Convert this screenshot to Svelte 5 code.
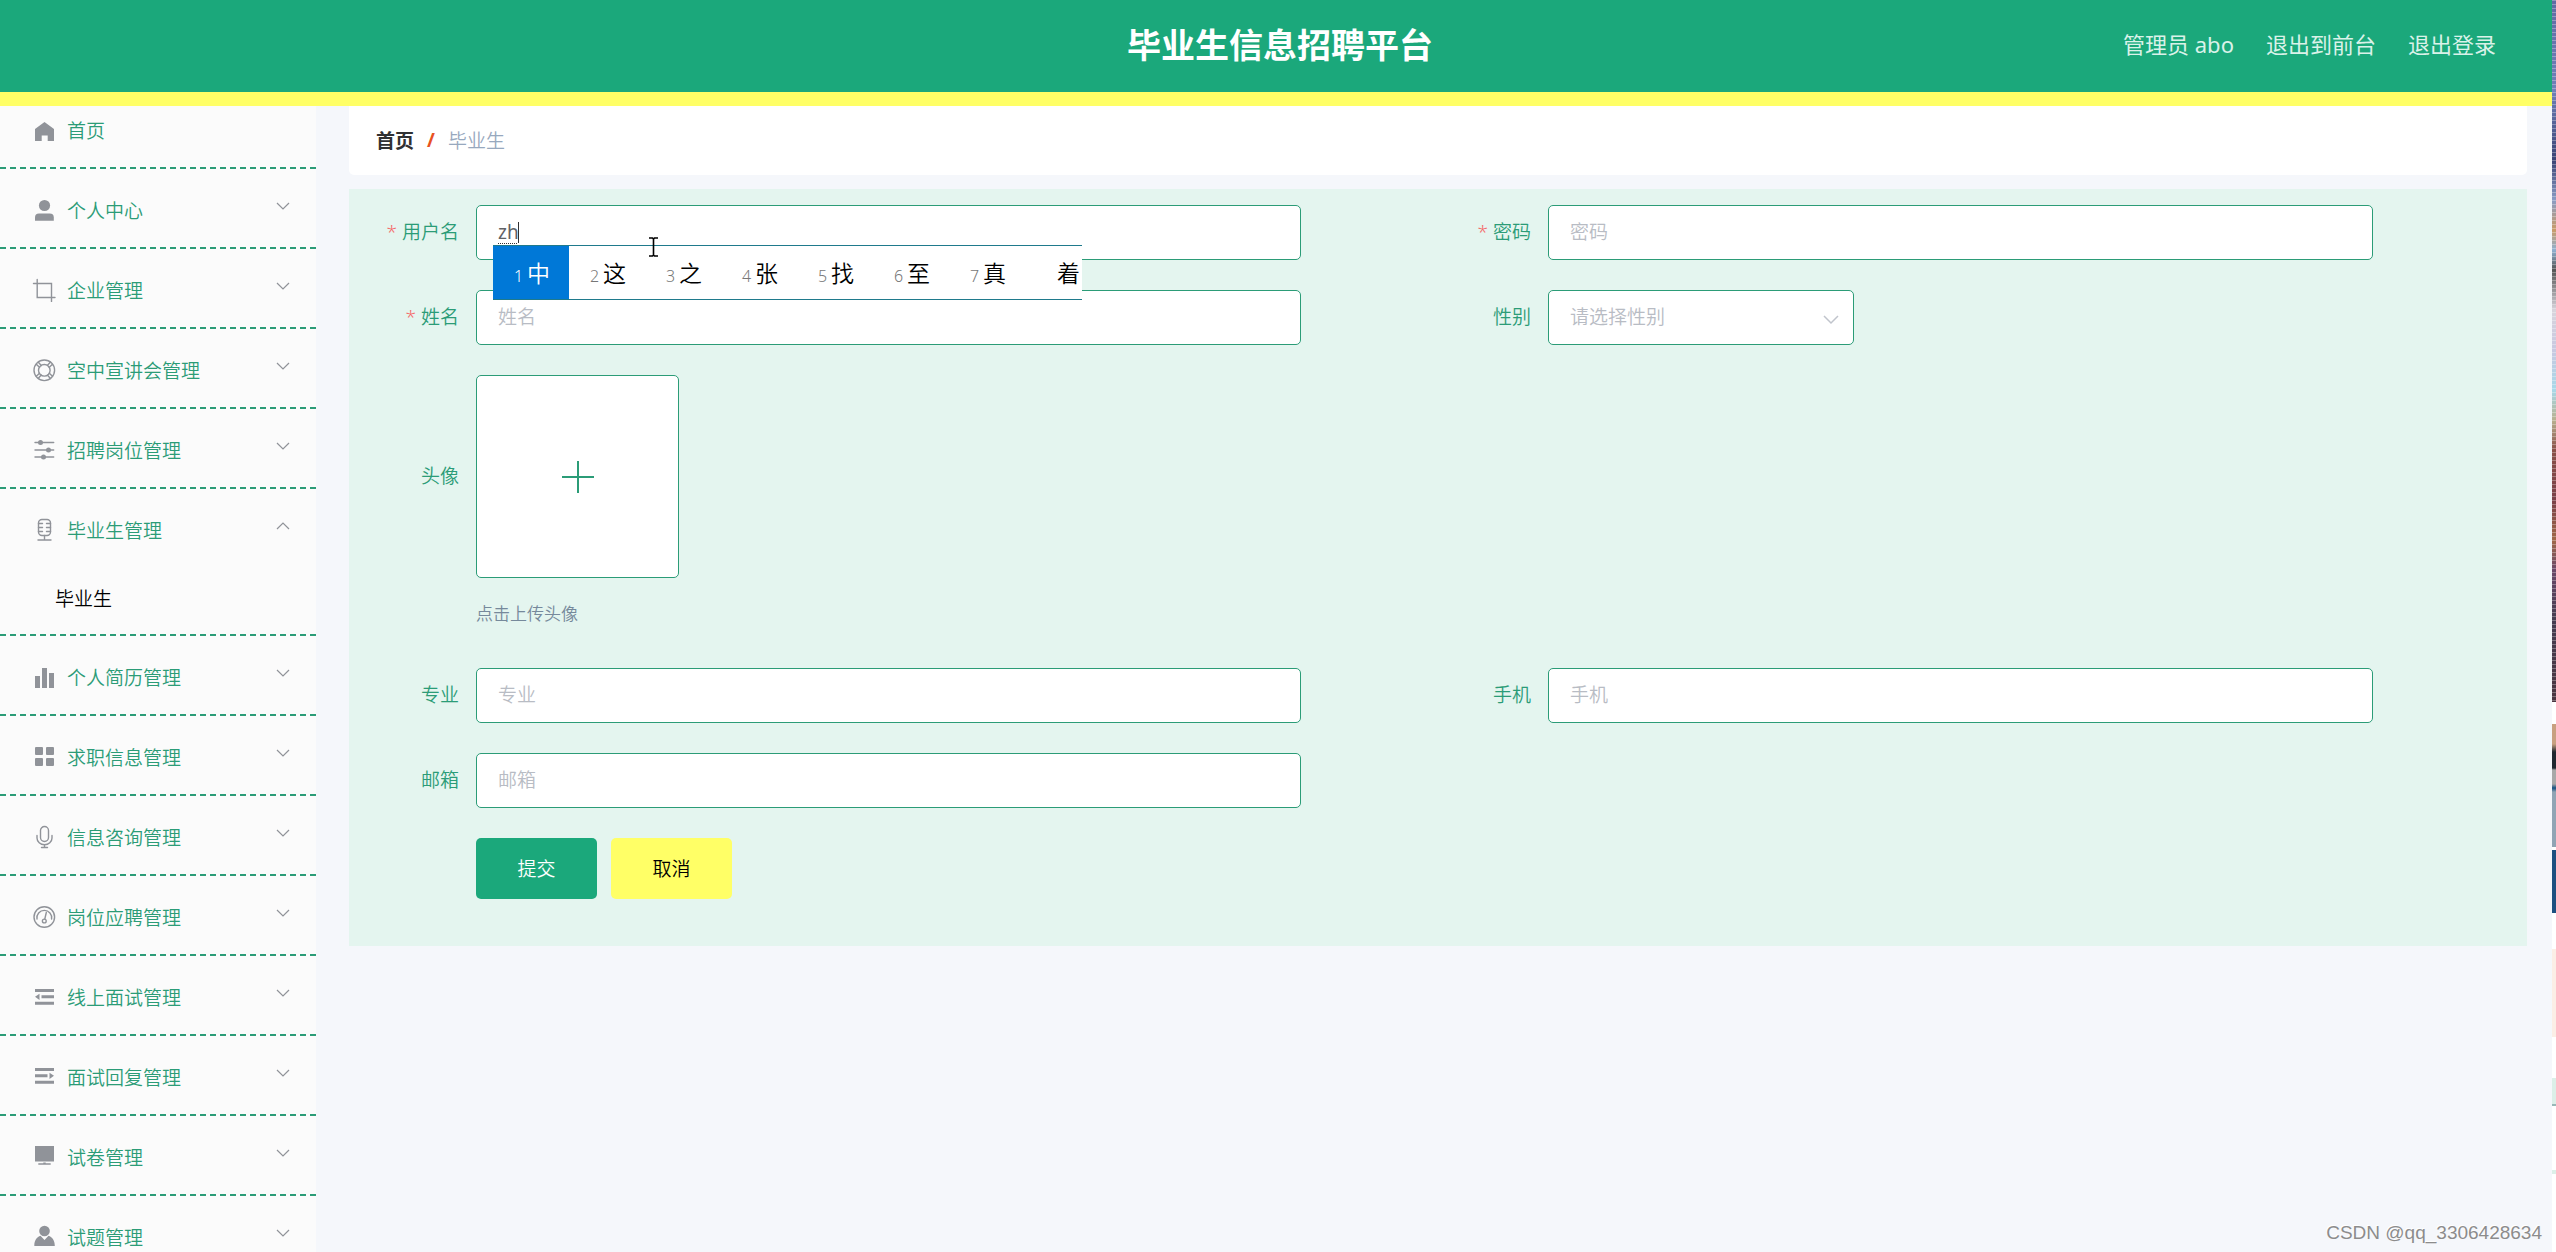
<script lang="ts">
  interface MenuItem {
    icon: string;
    label: string;
    open?: boolean;
    children?: string[];
  }

  let form = $state({
    username: 'zh',
    password: '',
    name: '',
    gender: '',
    major: '',
    phone: '',
    email: ''
  });

  let menu = $state<MenuItem[]>([
    { icon: 'user', label: '个人中心' },
    { icon: 'crop', label: '企业管理' },
    { icon: 'help', label: '空中宣讲会管理' },
    { icon: 'operation', label: '招聘岗位管理' },
    { icon: 'mic', label: '毕业生管理', open: true, children: ['毕业生'] },
    { icon: 'histogram', label: '个人简历管理' },
    { icon: 'grid', label: '求职信息管理' },
    { icon: 'microphone', label: '信息咨询管理' },
    { icon: 'odometer', label: '岗位应聘管理' },
    { icon: 'fold', label: '线上面试管理' },
    { icon: 'unfold', label: '面试回复管理' },
    { icon: 'platform', label: '试卷管理' },
    { icon: 'custom', label: '试题管理' }
  ]);

  const candidates = ['中', '这', '之', '张', '找', '至', '真', '着'];

  function toggle(item: MenuItem) {
    item.open = !item.open;
  }
</script>

{#snippet icon(name: string)}
  <svg class="icon" viewBox="0 0 24 24" aria-hidden="true">
    {#if name === 'home'}
      <path class="fill" d="M12.500 4 22 11v12h-6.300v-5.500h-6V23H3V11z" />
    {:else if name === 'user'}
      <circle class="fill" cx="12.500" cy="7.500" r="5.600" />
      <path class="fill" d="M3 22.800v-3.300q0-4 4-4h10.800q4 0 4 4v3.300z" />
    {:else if name === 'crop'}
      <path class="line" d="M1.500 5.500H19.500V23.500M5.200 1.500V19.500H23" />
    {:else if name === 'help'}
      <g class="line">
        <circle cx="12.300" cy="12.300" r="10.300" />
        <circle cx="12.300" cy="12.300" r="5.800" />
        <path d="m4.300 6.300 3.200 3M6.300 4.300l3 3.200M15.500 7.300l3-3.200M17.300 9.300l3.200-3M4.300 18.300l3.200-3M6.300 20.300l3-3.200M15.500 17.300l3 3.200M17.300 15.300l3.200 3" />
      </g>
    {:else if name === 'operation'}
      <path class="line" d="M3 4.500h18.700M3 12h18.700M3 19h18.700" />
      <g class="fill">
        <circle cx="8.500" cy="4.500" r="2.500" />
        <circle cx="16.500" cy="12" r="2.500" />
        <circle cx="11.500" cy="19" r="2.500" />
      </g>
    {:else if name === 'mic'}
      <g class="line">
        <rect x="6.500" y="1.500" width="12" height="16" rx="3.500" />
        <path d="M6.500 5.500h4M6.500 9.500h4M6.500 13.500h4M18.500 5.500h-4M18.500 9.500h-4M18.500 13.500h-4M12.500 17.500V22M6 22h13" />
      </g>
    {:else if name === 'histogram'}
      <path class="fill" d="M3 11h5v12H3zM10 3h5v20h-5zM17 8h5v15h-5z" />
    {:else if name === 'grid'}
      <g class="fill">
        <rect x="3" y="2" width="8" height="8" rx="1" />
        <rect x="14" y="2" width="8" height="8" rx="1" />
        <rect x="3" y="13" width="8" height="8" rx="1" />
        <rect x="14" y="13" width="8" height="8" rx="1" />
      </g>
    {:else if name === 'microphone'}
      <g class="line">
        <rect x="8.500" y="1.500" width="8" height="15" rx="4" />
        <path d="M5 10.500v2.500a7.500 6.800 0 0 0 15 0v-2.500M12.500 20v2.500M9.500 22.500h6" />
      </g>
    {:else if name === 'odometer'}
      <g class="line">
        <circle cx="12.300" cy="12" r="10.300" />
        <path d="M5 14a7.400 7.400 0 1 1 14.600 0M14.300 7.500l-1.500 6.500" />
        <circle cx="12.300" cy="16" r="1.900" />
      </g>
    {:else if name === 'fold'}
      <path class="fill" d="M3 4h19v3H3zM9.500 10.300H22v3H9.500zM3 16.700h19v3H3zM3 11.800l4.500-3.100v6.200z" />
    {:else if name === 'unfold'}
      <path class="fill" d="M3 3h19v3H3zM3 9.300h12.500v3H3zM3 15.700h19v3H3zM22 10.800l-4.500-3.100v6.200z" />
    {:else if name === 'platform'}
      <path class="fill" d="M3 1h19v15.500H3zM11.300 17.500h2.400v.8h5v1.500H6.300v-1.500h5z" />
    {:else if name === 'custom'}
      <circle class="fill" cx="12.500" cy="6" r="5.300" />
      <path class="fill" d="M2.300 21c0-6 2.700-9 6.200-10.200l4 4.200 4-4.200C20 12 22.800 15 22.800 21z" />
    {/if}
  </svg>
{/snippet}

<div class="screen">
  <div class="app">
    <header class="header">
      <h1>毕业生信息招聘平台</h1>
      <nav class="header-links">
        <span>管理员 abo</span>
        <a href="#front">退出到前台</a>
        <a href="#logout">退出登录</a>
      </nav>
    </header>

    <div class="body">
      <nav class="sidebar">
        <ul class="menu">
          <li>
            <a class="menu-row" href="#home">
              {@render icon('home')}
              <span>首页</span>
            </a>
          </li>
          {#each menu as item}
            <li>
              <button class="menu-row" type="button" aria-expanded={!!item.open} onclick={() => toggle(item)}>
                {@render icon(item.icon)}
                <span>{item.label}</span>
                <svg class="arrow" class:up={item.open} viewBox="0 0 14 8" aria-hidden="true">
                  <path d="M1 1l6 6 6-6" />
                </svg>
              </button>
              {#if item.open && item.children}
                {#each item.children as child}
                  <a class="sub-row" href="#graduate">{child}</a>
                {/each}
              {/if}
            </li>
          {/each}
        </ul>
      </nav>

      <main class="main">
        <nav class="breadcrumb">
          <a href="#home">首页</a>
          <span class="slash">/</span>
          <span class="current">毕业生</span>
        </nav>

        <form class="form" onsubmit={(e) => e.preventDefault()}>
          <div class="field">
            <label for="username"><i>*</i>用户名</label>
            <div class="control">
              <input id="username" class="composing" type="text" autocomplete="off" bind:value={form.username} />
              <span class="caret"></span>
              <div class="ime">
                {#each candidates as word, i}
                  <div class="candidate" class:selected={i === 0}>
                    <small>{i < 7 ? i + 1 : ''}</small>
                    <span>{word}</span>
                  </div>
                {/each}
              </div>
              <svg class="ibeam" viewBox="0 0 9 20" aria-hidden="true">
                <path d="M0 1h3.500l1 1 1-1H9M4.500 2v16M0 19h3.500l1-1 1 1H9" />
              </svg>
            </div>
          </div>
          <div class="field">
            <label for="password"><i>*</i>密码</label>
            <div class="control">
              <input id="password" type="text" placeholder="密码" bind:value={form.password} />
            </div>
          </div>
          <div class="field">
            <label for="name"><i>*</i>姓名</label>
            <div class="control">
              <input id="name" type="text" placeholder="姓名" bind:value={form.name} />
            </div>
          </div>
          <div class="field">
            <label for="gender">性别</label>
            <div class="control select">
              <select id="gender" bind:value={form.gender}>
                <option value="">请选择性别</option>
                <option value="男">男</option>
                <option value="女">女</option>
              </select>
              <svg class="select-arrow" viewBox="0 0 16 10" aria-hidden="true">
                <path d="M1 1l7 7 7-7" />
              </svg>
            </div>
          </div>
          <div class="field full avatar">
            <label for="avatar">头像</label>
            <div class="control">
              <label class="upload" for="avatar">
                <svg viewBox="0 0 32 32" aria-hidden="true"><path d="M16 0v32M0 16h32" /></svg>
                <input id="avatar" type="file" accept="image/*" aria-label="头像" />
              </label>
              <p class="tip">点击上传头像</p>
            </div>
          </div>
          <div class="field">
            <label for="major">专业</label>
            <div class="control">
              <input id="major" type="text" placeholder="专业" bind:value={form.major} />
            </div>
          </div>
          <div class="field">
            <label for="phone">手机</label>
            <div class="control">
              <input id="phone" type="text" placeholder="手机" bind:value={form.phone} />
            </div>
          </div>
          <div class="field">
            <label for="email">邮箱</label>
            <div class="control">
              <input id="email" type="text" placeholder="邮箱" bind:value={form.email} />
            </div>
          </div>
          <div class="actions full">
            <button class="btn submit" type="submit">提交</button>
            <button class="btn cancel" type="button">取消</button>
          </div>
        </form>
      </main>
    </div>
  </div>
  <div class="edge"></div>
  <div class="watermark">CSDN @qq_3306428634</div>
</div>

<style>
  :global(body) {
    font-family: 'Noto Sans', 'Noto Sans CJK SC', sans-serif;
    font-size: 19px;
    background: #f5f7fb;
  }
  .screen {
    --green: #1ba87b;
    --line: #2b9c77;
    position: relative;
    display: flex;
    height: 100vh;
    overflow: hidden;
    font-weight: 350;
  }
  .app { flex: 1; display: flex; flex-direction: column; min-width: 0; }
  a { color: inherit; text-decoration: none; }
  button, input, select { font: inherit; box-sizing: border-box; }

  .header {
    position: relative;
    z-index: 2;
    display: grid;
    grid-template-columns: 1fr auto 1fr;
    align-items: center;
    height: 86px;
    flex-shrink: 0;
    padding: 0 56px 6px 64px;
    background: var(--green);
    border-bottom: 14px solid #ffff66;
  }
  .header h1 { grid-column: 2; margin: 0; font-size: 34px; font-weight: 700; color: #fff; }
  .header-links {
    display: flex;
    justify-content: flex-end;
    gap: 32px;
    font-size: 22px;
    font-weight: 400;
    color: #daf2e9;
  }

  .body { flex: 1; display: flex; min-height: 0; }
  .sidebar { width: 316px; flex-shrink: 0; background: #fbfbfb; }
  /* the list is scrolled a little under the header */
  .menu { list-style: none; margin: -17px 0 0; padding: 0; }
  .menu li { border-bottom: 2px dashed var(--line); }
  .menu-row {
    display: flex;
    align-items: center;
    gap: 11px;
    width: 100%;
    height: 78px;
    box-sizing: border-box;
    padding: 4px 26px 0 32px;
    border: none;
    background: none;
    color: var(--line);
    text-align: left;
    cursor: pointer;
  }
  .icon { width: 24px; height: 24px; flex-shrink: 0; }
  .fill { fill: #909399; }
  .line { fill: none; stroke: #909399; stroke-width: 1.4; stroke-linecap: round; }
  .arrow {
    width: 14px;
    height: 8px;
    margin: 0 0 8px auto;
    fill: none;
    stroke: #909399;
    stroke-width: 1.2;
  }
  .arrow.up { transform: rotate(180deg); }
  .sub-row { display: block; padding: 0 0 2px 55px; line-height: 65px; color: #000; }

  .main { flex: 1; min-width: 0; padding: 0 25px 0 33px; }
  .breadcrumb {
    display: flex;
    align-items: center;
    gap: 13px;
    height: 67px;
    padding: 0 0 2px 27px;
    margin-bottom: 14px;
    background: #fff;
    border-radius: 0 0 5px 5px;
  }
  .breadcrumb a { font-weight: 700; color: #303133; }
  .slash { font-weight: 700; color: #e8521f; }
  .current { color: #97a8be; }

  .form {
    display: grid;
    grid-template-columns: 1fr 1fr;
    row-gap: 30px;
    padding: 16px 17px 47px;
    background: #e4f5ef;
  }
  .full { grid-column: 1 / -1; }
  .field { display: grid; grid-template-columns: 110px 1fr; padding-right: 137px; }
  .field > label {
    padding-right: 17px;
    line-height: 55px;
    text-align: right;
    color: var(--line);
  }
  .field i { margin-right: 5px; font-style: normal; color: #f56c6c; }
  .control { position: relative; height: 55px; }
  .control > input, select {
    display: block;
    width: 100%;
    height: 55px;
    padding: 0 21px 2px;
    border: 1px solid var(--line);
    border-radius: 5px;
    background: #fff;
    color: #606266;
    outline: none;
  }
  input::placeholder { color: #b8bcc4; opacity: 1; }
  .control > .composing {
    font-weight: 400;
    text-decoration: underline dotted 1px #333;
    text-underline-offset: 4px;
  }
  .caret { position: absolute; left: 42px; top: 17px; width: 1px; height: 21px; background: #303133; }
  .select { width: 306px; }
  .select > select { appearance: none; color: #b8bcc4; }
  .select-arrow {
    position: absolute;
    right: 15px;
    top: 25px;
    width: 16px;
    height: 10px;
    fill: none;
    stroke: #c0c4cc;
    stroke-width: 1.5;
    pointer-events: none;
  }

  .ime {
    position: absolute;
    z-index: 1;
    left: 17px;
    top: 40px;
    display: flex;
    width: 589px;
    height: 55px;
    box-sizing: border-box;
    overflow: hidden;
    border: 1px solid #1f7a8c;
    border-width: 1px 0;
    background: #fff;
  }
  .candidate {
    display: flex;
    align-items: baseline;
    gap: 3px;
    flex: 0 0 76px;
    box-sizing: border-box;
    padding-left: 21px;
    line-height: 55px;
    font-size: 23px;
    color: #000;
  }
  .candidate small { width: 10px; font-size: 16px; color: #777; }
  .candidate small:empty { width: 8px; }
  .candidate.selected, .candidate.selected small { background: #0078d7; color: #fff; }
  .ibeam {
    position: absolute;
    z-index: 2;
    left: 173px;
    top: 32px;
    width: 9px;
    height: 20px;
    fill: none;
    stroke: #000;
    stroke-width: 1.6;
  }

  .avatar > label { line-height: 203px; }
  .avatar .control { height: auto; padding-bottom: 12px; }
  .upload {
    display: flex;
    align-items: center;
    justify-content: center;
    width: 203px;
    height: 203px;
    box-sizing: border-box;
    border: 1px solid var(--line);
    border-radius: 5px;
    background: #fff;
    cursor: pointer;
  }
  .upload svg { width: 32px; height: 32px; stroke: var(--line); stroke-width: 2; }
  .upload input { position: absolute; width: 1px; height: 1px; opacity: 0; }
  .tip { margin: 23px 0 0; font-size: 17px; line-height: 25px; color: #76899b; }

  .actions { display: flex; gap: 14px; padding-left: 110px; }
  .btn { width: 121px; height: 61px; padding: 0 0 2px; border: none; border-radius: 5px; cursor: pointer; }
  .submit { background: var(--green); color: #fff; }
  .cancel { background: #ffff66; color: #000; }

  /* sliver of the window behind the browser */
  .edge {
    width: 4px;
    flex-shrink: 0;
    background:
      repeating-linear-gradient(rgba(255, 255, 255, 0.3) 0 1px, transparent 1px 4px) top / 100% 702px no-repeat,
      linear-gradient(
        #5f6ba3 0, #6f80b8 90px, #3a4374 160px, #8a9cc4 200px, #c99a68 230px, #8fb0d0 250px,
        #555 270px, #d8d4dc 310px, #c8c8e0 350px, #a8d8e8 390px, #b8b090 420px, #8a5048 450px,
        #7a4048 500px, #a06848 540px, #6a4868 570px, #453c50 620px, #4a3540 702px,
        #fff 702px 724px, #c8a080 724px 744px, #202830 752px 768px, #a8a8a8 770px 784px,
        #155080 788px, #90a4b4 792px 847px, #fff 847px 850px, #1d5080 850px 913px,
        #fff 913px 949px, #fbeee6 949px 1037px, #fff 1037px 1078px, #dcefe8 1078px 1104px,
        #98b8b8 1104px 1106px, #fff 1106px 1170px, #dcefe8 1170px 1174px, #fff 1174px
      );
  }
  .watermark {
    position: absolute;
    right: 14px;
    bottom: 8px;
    font-family: 'Liberation Sans', sans-serif;
    font-weight: 400;
    font-size: 19px;
    line-height: 22px;
    color: #8c8c8c;
    text-shadow: -1px -1px 0 #fff;
  }
</style>
